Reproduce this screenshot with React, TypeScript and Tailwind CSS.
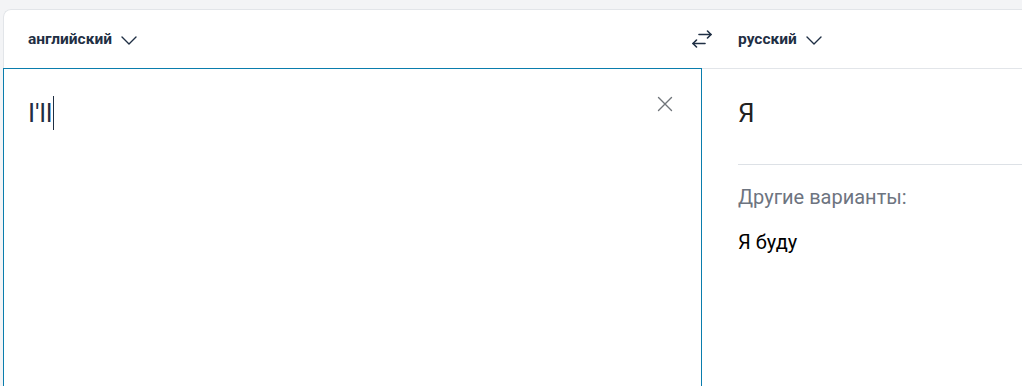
import React from 'react'

const Chevron: React.FC = () => (
  <svg width="16" height="9" viewBox="0 0 16 9" fill="none" stroke="currentColor" strokeWidth="1.4" strokeLinecap="round" strokeLinejoin="round">
    <polyline points="1,1 8,8 15,1" />
  </svg>
)

const SwapIcon: React.FC = () => (
  <svg width="20" height="22" viewBox="0 0 20 22" fill="none" stroke="currentColor" strokeWidth="1.6" strokeLinecap="round" strokeLinejoin="round">
    <path d="M7 5.5h12" />
    <path d="M15.5 2l3.5 3.5-3.5 3.5" />
    <path d="M13 14.5H1" />
    <path d="M4.5 11L1 14.5 4.5 18" />
  </svg>
)

const ClearIcon: React.FC = () => (
  <svg width="16" height="16" viewBox="0 0 16 16" fill="none" stroke="currentColor" strokeWidth="1.4" strokeLinecap="round">
    <path d="M1.5 1.5l13 13M14.5 1.5l-13 13" />
  </svg>
)

const LangButton: React.FC<{ label: string }> = ({ label }) => (
  <button className="flex items-center gap-[9px] text-[15.5px] font-bold text-[#1f2f44]">
    <span>{label}</span>
    <Chevron />
  </button>
)

export default function App() {
  return (
    <div
      className="h-[386px] overflow-hidden bg-[#f3f4f6] pt-[9px] pl-[3px]"
      style={{ fontFamily: 'Roboto, "Noto Sans", sans-serif' }}
    >
      <div className="bg-white rounded-tl-[8px] flex flex-col">
        {/* Header */}
        <div className="h-[59px] pt-[2px] flex items-center border-t border-l border-[#e2e5e9] rounded-tl-[8px]">
          <div className="w-[688px] pl-[24px]">
            <LangButton label="английский" />
          </div>
          <button className="w-[20px] text-[#1f2f44]">
            <SwapIcon />
          </button>
          <div className="pl-[26px]">
            <LangButton label="русский" />
          </div>
        </div>

        {/* Body */}
        <div className="flex h-[420px]">
          <div className="w-[699px] shrink-0 border border-[#0a7dad] pl-[24px] pr-[28px] pt-[27px] flex justify-between items-start">
            <div className="flex items-center text-[26px] text-[#1f2f44] leading-[32px]">
              <span>I'll</span>
              <span className="ml-[1px] w-[1px] h-[34px] bg-[#1f2f44]" />
            </div>
            <div className="mt-0 text-[#70757a]">
              <ClearIcon />
            </div>
          </div>

          <div className="flex-1 border-t border-[#e2e5e9] pl-[36px] pt-[28px]">
            <div className="text-[26px] leading-[32px] text-[#222]">Я</div>
            <div className="mt-[35px] border-t border-[#dde1e6]" />
            <div className="mt-[18px] text-[20px] leading-[28px] text-[#6d7480]">Другие варианты:</div>
            <div className="mt-[17px] text-[20px] leading-[28px] text-black">Я буду</div>
          </div>
        </div>
      </div>
    </div>
  )
}
